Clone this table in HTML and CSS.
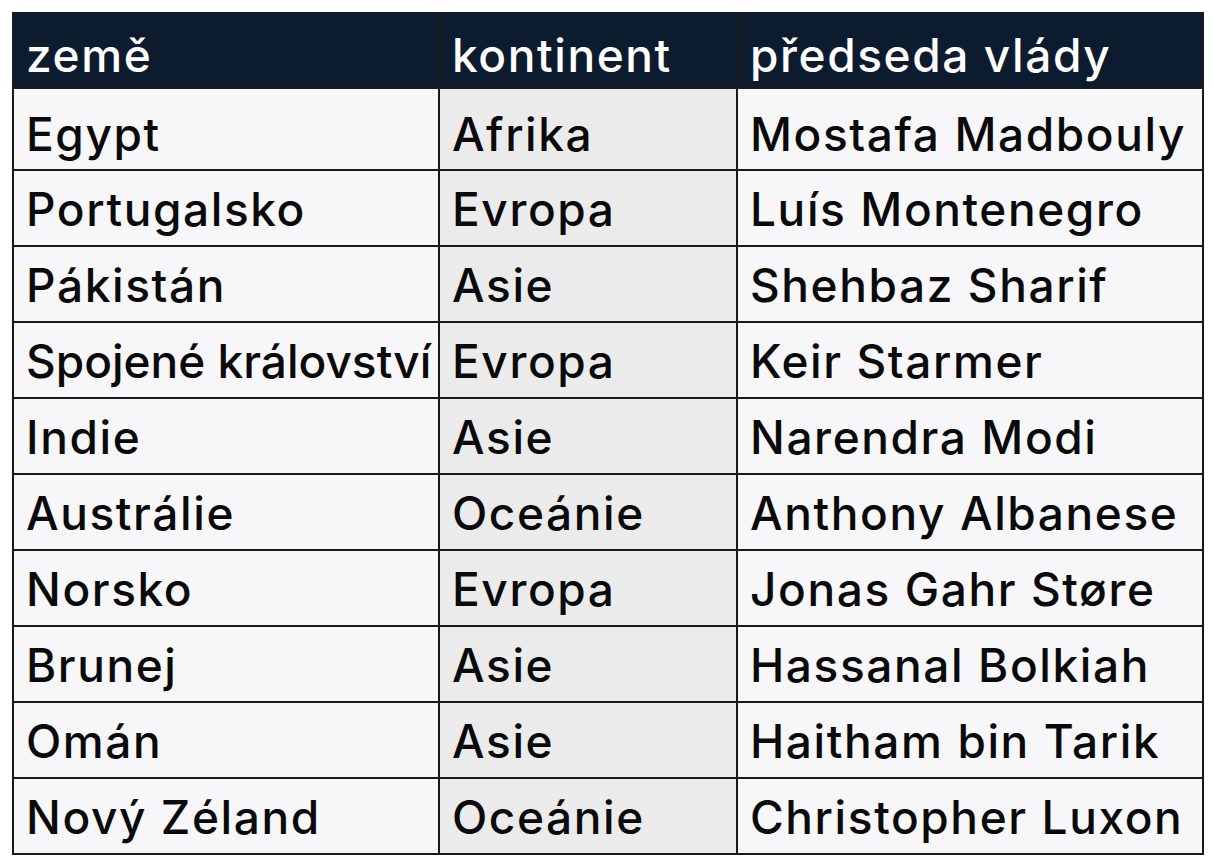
FILE: index.html
```html
<!DOCTYPE html>
<html lang="cs">
<head>
<meta charset="utf-8">
<title>Předsedové vlád</title>
<link rel="stylesheet" href="styles.css">
</head>
<body>
<table class="leaders">
  <colgroup>
    <col class="c-country">
    <col class="c-continent">
    <col class="c-pm">
  </colgroup>
  <thead>
    <tr><th>země</th><th>kontinent</th><th>předseda vlády</th></tr>
  </thead>
  <tbody>
    <tr class="first"><td>Egypt</td><td class="mid">Afrika</td><td>Mostafa Madbouly</td></tr>
    <tr><td>Portugalsko</td><td class="mid">Evropa</td><td>Luís Montenegro</td></tr>
    <tr><td>Pákistán</td><td class="mid">Asie</td><td>Shehbaz Sharif</td></tr>
    <tr><td class="tight">Spojené království</td><td class="mid">Evropa</td><td>Keir Starmer</td></tr>
    <tr><td>Indie</td><td class="mid">Asie</td><td>Narendra Modi</td></tr>
    <tr><td>Austrálie</td><td class="mid">Oceánie</td><td>Anthony Albanese</td></tr>
    <tr><td>Norsko</td><td class="mid">Evropa</td><td>Jonas Gahr Støre</td></tr>
    <tr><td>Brunej</td><td class="mid">Asie</td><td>Hassanal Bolkiah</td></tr>
    <tr><td>Omán</td><td class="mid">Asie</td><td>Haitham bin Tarik</td></tr>
    <tr><td>Nový Zéland</td><td class="mid">Oceánie</td><td>Christopher Luxon</td></tr>
  </tbody>
</table>
</body>
</html>
```
FILE: styles.css
```css
html, body {
  margin: 0;
  padding: 0;
  background: #ffffff;
}
body {
  padding: 12px 0 0 12px;
  font-family: "Inter", "Noto Sans", sans-serif;
}
.leaders {
  border-collapse: collapse;
  table-layout: fixed;
  width: 1190px;
  border: 2px solid #1a1a1a;
}
.c-country { width: 426px; }
.c-continent { width: 298px; }
.c-pm { width: 466px; }
.leaders th,
.leaders td {
  border: 2px solid #1a1a1a;
  padding: 15px 0 13px 12px;
  text-align: left;
  vertical-align: top;
  white-space: nowrap;
  overflow: hidden;
  font-size: 46px;
  line-height: 46px;
  letter-spacing: 1.6px;
}
.leaders th {
  background: #0d1b2e;
  color: #ffffff;
  font-weight: 550;
  padding-top: 18px;
  padding-bottom: 9px;
}
.leaders td {
  background: #f7f7f9;
  color: #0a0a0a;
  font-weight: 450;
}
.leaders tr.first td {
  padding-top: 22px;
  padding-bottom: 12px;
}
.leaders td.mid {
  background: #ebebeb;
}
.leaders td.tight {
  letter-spacing: 0;
}
```
